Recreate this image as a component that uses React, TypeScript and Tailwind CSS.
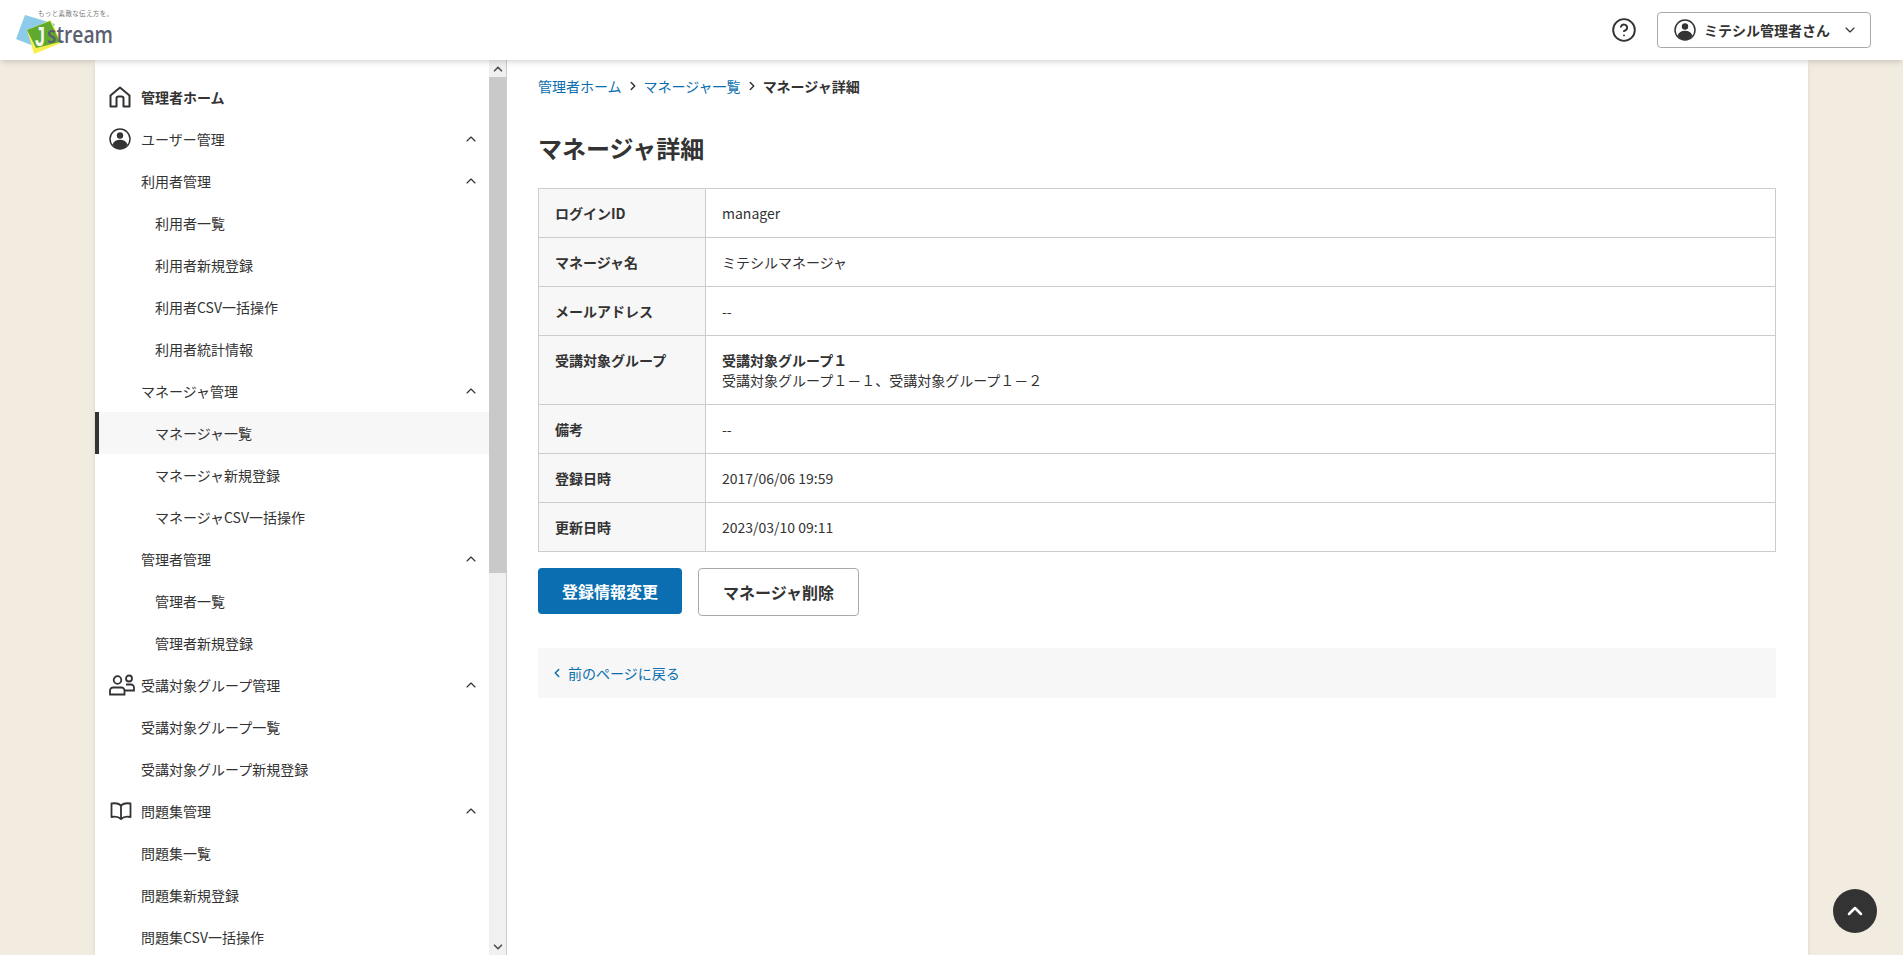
import { ChevronDown, ChevronLeft, ChevronRight, ChevronUp, CircleHelp } from "lucide-react";
import type { ReactNode } from "react";

function Logo() {
  return (
    <svg width="136" height="56" viewBox="0 0 136 56" className="shrink-0">
      <polygon points="16,37 25,13 55,22 44,48" fill="#8ccbe9" />
      <polygon points="34,52 61,41 51,18 27,28" fill="#f7ee4f" />
      <polygon points="27,28 50,19 60,40 36,46" fill="#5fa92f" />
      <text x="35" y="44" fontSize="27" fontWeight="700" fill="#f4f6ee" fontFamily="'Liberation Sans', sans-serif" textLength="10" lengthAdjust="spacingAndGlyphs">J</text>
      <text x="47" y="41" fontSize="23" fontWeight="600" fill="#5b5f70" fontFamily="'Open Sans', sans-serif" textLength="66" lengthAdjust="spacingAndGlyphs">stream</text>
      <text x="38" y="14" fontSize="6.5" fill="#777" fontFamily="'Noto Sans CJK JP', sans-serif" textLength="75">もっと素敵な伝え方を。</text>
    </svg>
  );
}

function HomeIcon() {
  return (
    <svg width="22" height="22" viewBox="0 0 22 22" fill="none" stroke="#333" strokeWidth="2" strokeLinejoin="round">
      <path d="M1.5 20.5V9.5L11 1.5l9.5 8v11h-6v-8a2 2 0 0 0-2-2h-3a2 2 0 0 0-2 2v8z" />
    </svg>
  );
}

function UserIcon({ size = 22 }: { size?: number }) {
  return (
    <svg width={size} height={size} viewBox="0 0 22 22">
      <circle cx="11" cy="11" r="10" fill="none" stroke="#333" strokeWidth="1.5" />
      <circle cx="11" cy="7.5" r="3.2" fill="#333" />
      <path d="M3.6 16.5c1-3.3 3.6-4.8 7.4-4.8s6.400 1.500 7.400 4.800A10 10 0 0 1 11 21a10 10 0 0 1-7.400-4.500z" fill="#333" />
    </svg>
  );
}

function GroupIcon() {
  return (
    <svg width="26" height="22" viewBox="0 0 26 22" fill="none" stroke="#333" strokeWidth="1.8">
      <circle cx="8.500" cy="6" r="3.800" />
      <circle cx="20" cy="4.500" r="3" />
      <path d="M1 20.500v-4a3 3 0 0 1 3-3h8.500a3 3 0 0 1 3 3v4z" />
      <path d="M15.500 16.500H25v-3a3 3 0 0 0-3-3h-5" />
    </svg>
  );
}

function BookIcon() {
  return (
    <svg width="24" height="18" viewBox="0 0 24 18" fill="none" stroke="#333" strokeWidth="1.8" strokeLinejoin="round">
      <path d="M12 3.500C10 1.500 6 1 2.500 1.500V15c3.500-.6 7.500 0 9.500 2 2-2 6-2.600 9.500-2V1.500C18 1 14 1.500 12 3.500z" />
      <path d="M12 3.500V17" />
    </svg>
  );
}

type Row = { label: string; level: 0 | 1 | 2; icon?: ReactNode; bold?: boolean; open?: boolean; active?: boolean };

const rows: Row[] = [
  { label: "管理者ホーム", level: 0, icon: <HomeIcon />, bold: true },
  { label: "ユーザー管理", level: 0, icon: <UserIcon />, open: true },
  { label: "利用者管理", level: 1, open: true },
  { label: "利用者一覧", level: 2 },
  { label: "利用者新規登録", level: 2 },
  { label: "利用者CSV一括操作", level: 2 },
  { label: "利用者統計情報", level: 2 },
  { label: "マネージャ管理", level: 1, open: true },
  { label: "マネージャ一覧", level: 2, active: true },
  { label: "マネージャ新規登録", level: 2 },
  { label: "マネージャCSV一括操作", level: 2 },
  { label: "管理者管理", level: 1, open: true },
  { label: "管理者一覧", level: 2 },
  { label: "管理者新規登録", level: 2 },
  { label: "受講対象グループ管理", level: 0, icon: <GroupIcon />, open: true },
  { label: "受講対象グループ一覧", level: 1 },
  { label: "受講対象グループ新規登録", level: 1 },
  { label: "問題集管理", level: 0, icon: <BookIcon />, open: true },
  { label: "問題集一覧", level: 1 },
  { label: "問題集新規登録", level: 1 },
  { label: "問題集CSV一括操作", level: 1 },
];

function SideRow({ row }: { row: Row }) {
  const pad = row.active ? "border-l-4 border-[#333] bg-[#f7f7f7] pl-14" : row.level === 2 ? "pl-15" : row.icon ? "pl-3.5" : "pl-11.5";
  return (
    <div className={`flex h-10.5 shrink-0 items-center pr-2.5 text-sm ${pad} ${row.bold ? "font-bold" : ""}`}>
      {row.icon && <span className="flex w-8 shrink-0 items-center">{row.icon}</span>}
      <span className="flex-1">{row.label}</span>
      {row.open && <ChevronUp size={16} strokeWidth={1.75} />}
    </div>
  );
}

const details: [string, ReactNode][] = [
  ["ログインID", "manager"],
  ["マネージャ名", "ミテシルマネージャ"],
  ["メールアドレス", "--"],
  [
    "受講対象グループ",
    <>
      <div className="font-bold">受講対象グループ１</div>
      <div>受講対象グループ１－１、受講対象グループ１－２</div>
    </>,
  ],
  ["備考", "--"],
  ["登録日時", "2017/06/06 19:59"],
  ["更新日時", "2023/03/10 09:11"],
];

export default function App() {
  return (
    <div className="flex h-screen flex-col overflow-hidden bg-[#f2ebe0] font-['Noto_Sans_CJK_JP',sans-serif] text-[#333]">
      <header className="relative z-10 flex h-15 shrink-0 items-center justify-between bg-white pr-8 shadow-md">
        <Logo />
        <div className="flex items-center gap-5">
          <CircleHelp size={26} strokeWidth={1.75} />
          <button className="flex h-9 items-center gap-2 rounded border border-[#aaa] bg-white pl-4 pr-3 text-sm font-bold">
            <UserIcon />
            <span className="mr-1">ミテシル管理者さん</span>
            <ChevronDown size={16} strokeWidth={1.75} />
          </button>
        </div>
      </header>
      <div className="mx-auto flex min-h-0 w-[1713px] flex-1 bg-white shadow-md">
        <aside className="flex w-[412px] shrink-0 border-r border-[#ccc]">
          <nav className="flex min-w-0 flex-1 flex-col overflow-hidden pt-4">
            {rows.map((r) => (
              <SideRow key={r.label} row={r} />
            ))}
          </nav>
          <div className="flex w-[17px] shrink-0 flex-col bg-[#f0f0f0]">
            <div className="flex h-[17px] items-center justify-center">
              <ChevronUp size={14} strokeWidth={3} className="text-[#555]" />
            </div>
            <div className="h-[496px] bg-[#c9c9c9]" />
            <div className="flex-1" />
            <div className="flex h-[17px] items-center justify-center">
              <ChevronDown size={14} strokeWidth={3} className="text-[#555]" />
            </div>
          </div>
        </aside>
        <main className="min-w-0 flex-1 pl-[31px] pr-8 pt-4">
          <div className="flex items-center gap-1 text-sm">
            <span className="text-[#0a6eb0]">管理者ホーム</span>
            <ChevronRight size={14} strokeWidth={2.5} />
            <span className="text-[#0a6eb0]">マネージャ一覧</span>
            <ChevronRight size={14} strokeWidth={2.5} />
            <span className="font-bold">マネージャ詳細</span>
          </div>
          <h1 className="mt-9 text-2xl font-bold">マネージャ詳細</h1>
          <table className="mt-6 w-full text-sm">
            <tbody>
              {details.map(([k, v]) => (
                <tr key={k}>
                  <th className="w-[167px] border border-[#ccc] bg-[#f7f7f7] px-4 py-3.5 text-left align-top font-bold">{k}</th>
                  <td className="border border-[#ccc] px-4 py-3.5 align-top">{v}</td>
                </tr>
              ))}
            </tbody>
          </table>
          <div className="mt-4 flex items-start gap-4">
            <button className="h-11.5 rounded bg-[#0a6eb0] px-6 font-bold text-white">登録情報変更</button>
            <button className="h-12 rounded border border-[#aaa] bg-white px-6 font-bold">マネージャ削除</button>
          </div>
          <div className="mt-8 flex h-12.5 items-center gap-1 bg-[#f7f7f7] px-3 text-sm text-[#0a6eb0]">
            <ChevronLeft size={14} strokeWidth={2.5} />
            <span>前のページに戻る</span>
          </div>
        </main>
      </div>
      <button className="fixed bottom-5.5 right-6.5 flex size-11 items-center justify-center rounded-full bg-[#333] text-white">
        <ChevronUp size={24} strokeWidth={2.5} />
      </button>
    </div>
  );
}
